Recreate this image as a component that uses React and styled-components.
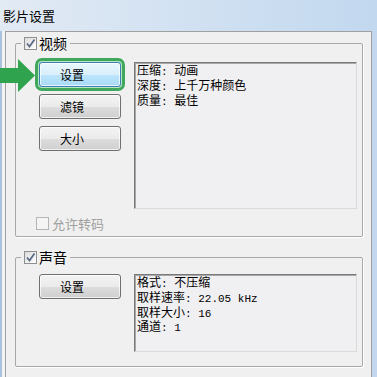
import React from 'react';
import styled, { createGlobalStyle, css } from 'styled-components';

const Global = createGlobalStyle`
  html, body {
    margin: 0;
    padding: 0;
    background: #f0f0f0;
  }
  body {
    font-family: "Noto Sans CJK SC", "Liberation Sans", sans-serif;
    color: #000;
  }
`;

const Window = styled.div`
  position: relative;
  width: 377px;
  height: 377px;
  overflow: hidden;
  display: flex;
  flex-direction: column;
`;

const TitleBar = styled.div`
  height: 31px;
  flex: none;
  display: flex;
  align-items: center;
  padding-left: 3px;
  font-size: 13px;
  background: linear-gradient(to right, #e2eaf4 0%, #d3e2f2 45%, #c2d8ef 100%);
`;

const Frame = styled.div`
  flex: 1;
  display: flex;
  border-left: 2px solid #a9c2df;
  border-right: 5px solid #c3d7ee;
  padding-left: 3px;
  background: #f3f3f3;
`;

const Panel = styled.div`
  flex: 1;
  display: flex;
  flex-direction: column;
  gap: 12px;
  border: 1px solid #a0a0a0;
  border-bottom: none;
  background: #f0f0f0;
  padding: 3px 8px 0 9px;
`;

const Group = styled.fieldset`
  margin: 0;
  padding: 0;
  min-width: 0;
  border: 1px solid #a8a8a8;
  border-radius: 2px;
  box-shadow: 1px 1px 0 #fff;
`;

const Legend = styled.legend`
  margin-left: 5px;
  padding: 0 3px;
  display: flex;
  align-items: center;
  gap: 2px;
  font-size: 14px;
  line-height: 16px;
  background: #f0f0f0;
`;

const CheckBox = styled.span`
  width: 11px;
  height: 11px;
  flex: none;
  display: inline-flex;
  align-items: center;
  justify-content: center;
  border: 1px solid ${p => (p.disabled ? '#b4b4b4' : '#8e8f8f')};
  background: ${p =>
    p.disabled ? '#f4f4f4' : 'linear-gradient(135deg, #dcdcdc, #ffffff)'};
`;

const GroupBody = styled.div`
  padding: ${p => p.pad};
`;

const Row = styled.div`
  display: grid;
  grid-template-columns: 82px 223px;
  column-gap: 13px;
  align-items: start;
  padding-left: 23px;
`;

const ButtonStack = styled.div`
  display: flex;
  flex-direction: column;
  gap: 7px;
`;

const Button = styled.button`
  height: 25px;
  width: 82px;
  padding: 0 16px 0 0;
  font-family: inherit;
  font-size: 12px;
  color: #000;
  border: 1px solid #707070;
  border-radius: 3px;
  background: linear-gradient(#f3f3f3 0%, #ebebeb 50%, #dddddd 51%, #cfcfcf 100%);
  box-shadow: inset 0 0 0 1px rgba(255, 255, 255, 0.7);
  ${p =>
    p.focused &&
    css`
      border-color: #3c7fb1;
      background: linear-gradient(#eaf6fd 0%, #d9f0fc 50%, #bee6fd 51%, #a7d9f5 100%);
      box-shadow: inset 0 0 0 1px rgba(255, 255, 255, 0.7), 0 0 0 1px #b8e6c3,
        0 0 0 4px #3fa85c;
    `}
`;

const InfoBox = styled.div`
  height: ${p => p.h}px;
  box-sizing: border-box;
  border: 1px solid #dadada;
  border-top-color: #7a7a7a;
  border-left-color: #7a7a7a;
  box-shadow: inset 1px 1px 0 #a8a8a8;
  background: #f0eff2;
  padding: 1px 2px;
  font-size: 12px;
  line-height: 12.8px;
  white-space: pre;
`;

const Mono = styled.span`
  font-family: "Liberation Mono", monospace;
  font-size: 11px;
`;

const OptionRow = styled.div`
  display: flex;
  align-items: center;
  gap: 3px;
  padding-left: 20px;
  margin-top: 6px;
  height: 16px;
  font-size: 13px;
  color: #a0a0a0;
`;

const Arrow = styled.svg`
  position: absolute;
  left: 0;
  top: 58px;
`;

const Check = () => (
  <svg width="11" height="11" viewBox="0 0 11 11">
    <path d="M2 5.5 L4.5 8.5 L9.5 1.5" fill="none" stroke="#5b6b86" strokeWidth="1.8" />
  </svg>
);

const Line = ({ label, value }) => (
  <div>
    {label}
    <Mono>: </Mono>
    {value}
  </div>
);

export default function App() {
  return (
    <Window>
      <Global />
      <TitleBar>影片设置</TitleBar>
      <Frame>
        <Panel>
          <Group>
            <Legend>
              <CheckBox><Check /></CheckBox>
              视频
            </Legend>
            <GroupBody pad="11px 0 5px 0">
              <Row>
                <ButtonStack>
                  <Button focused>设置</Button>
                  <Button>滤镜</Button>
                  <Button>大小</Button>
                </ButtonStack>
                <InfoBox h={147}>
                  <Line label="压缩" value="动画" />
                  <Line label="深度" value="上千万种颜色" />
                  <Line label="质量" value="最佳" />
                </InfoBox>
              </Row>
              <OptionRow>
                <CheckBox disabled />
                允许转码
              </OptionRow>
            </GroupBody>
          </Group>
          <Group>
            <Legend>
              <CheckBox><Check /></CheckBox>
              声音
            </Legend>
            <GroupBody pad="9px 0 14px 0">
              <Row>
                <Button>设置</Button>
                <InfoBox h={78}>
                  <Line label="格式" value="不压缩" />
                  <Line label="取样速率" value={<Mono>22.05 kHz</Mono>} />
                  <Line label="取样大小" value={<Mono>16</Mono>} />
                  <Line label="通道" value={<Mono>1</Mono>} />
                </InfoBox>
              </Row>
            </GroupBody>
          </Group>
        </Panel>
      </Frame>
      <Arrow width="36" height="36" viewBox="0 0 36 36">
        <polygon points="0,10 18,10 18,1 35,17.5 18,34 18,25 0,25" fill="#2fa34e" />
      </Arrow>
    </Window>
  );
}
